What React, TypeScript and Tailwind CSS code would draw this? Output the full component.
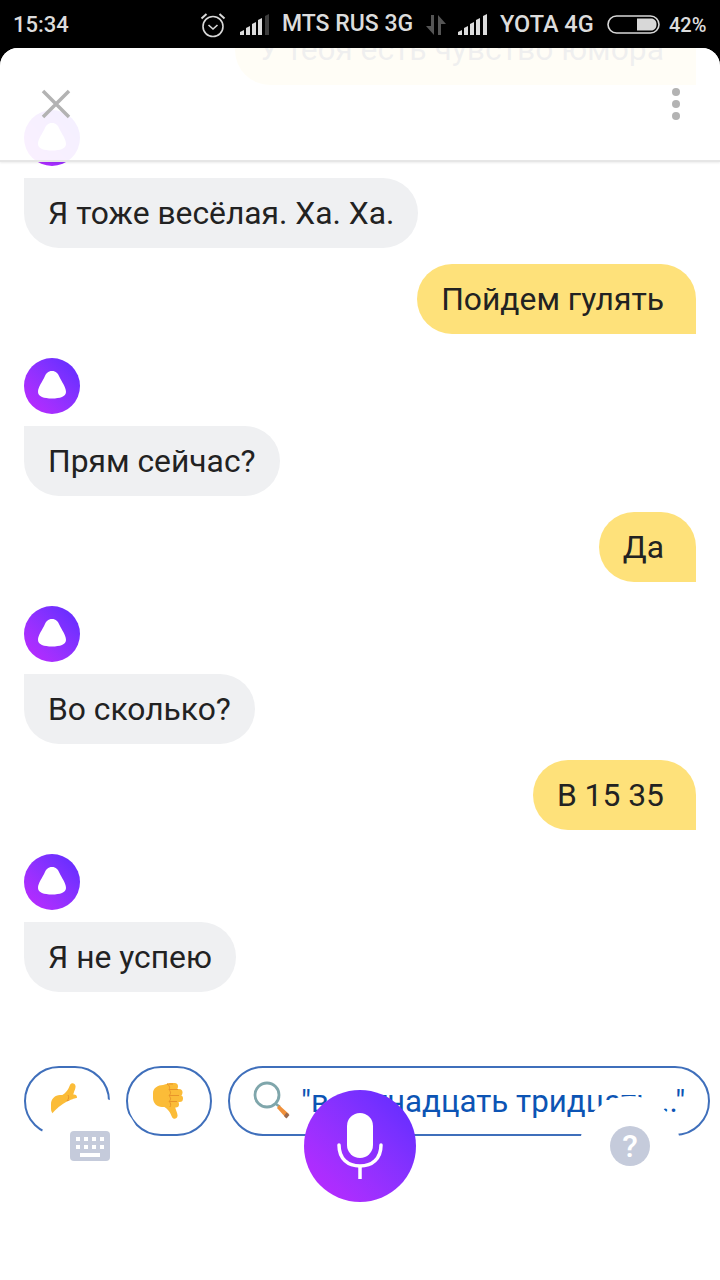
import React from "react";

function Alisa({ className = "" }: { className?: string }) {
  return (
    <div className={"w-14 h-14 rounded-full bg-gradient-to-tr from-[#c026fe] to-[#5b2bff] flex items-center justify-center " + className}>
      <svg width="28" height="28" viewBox="0 0 28 28" className="mt-[-3px]">
        <path d="M14 0C18 0 20 2.500 21.500 6C23.500 10.500 28 16 28 21C28 25.500 22 27.500 14 27.500C6 27.500 0 25.500 0 21C0 16 4.500 10.500 6.500 6C8 2.500 10 0 14 0Z" fill="#fff" />
      </svg>
    </div>
  );
}

function Bot({ text }: { text: string }) {
  return (
    <div className="self-start h-[70px] rounded-[35px] rounded-tl-none bg-[#eff0f2] px-6 pt-[2px] flex items-center text-[31.800px] text-[#222] whitespace-nowrap">{text}</div>
  );
}

function User({ text }: { text: string }) {
  return (
    <div className="self-end h-[70px] rounded-[35px] rounded-br-none bg-[#fee17a] pl-6 pr-8 pt-[2px] flex items-center text-[31.800px] text-[#222] whitespace-nowrap">{text}</div>
  );
}

function Thumb({ up = false }: { up?: boolean }) {
  return (
    <svg width="30" height="36" viewBox="0 0 30 36" className={up ? "-scale-y-100" : ""}>
      <path d="M11 22L22 22C22 27 25 30 24.500 33C24 36.500 20 36.500 19 34C17 29 15 26 10 23Z" fill="#fbbc38" />
      <path d="M0 10C0 5 5 2 10 2L15 0.500L18 24L9 24C4 24 0 20 0 15Z" fill="#fbbc38" />
      <rect x="14" y="0" width="11" height="7" rx="3.500" fill="#fbbc38" />
      <rect x="14" y="6" width="15.500" height="7" rx="3.500" fill="#fbbc38" />
      <rect x="14" y="12" width="16" height="7" rx="3.500" fill="#fbbc38" />
      <rect x="14" y="18" width="12" height="6.500" rx="3.200" fill="#fbbc38" />
      <path d="M14 1H20M16 6.500H25M16 12.500H26M16 18.500H24M14 1C17 3 17 5 16 6.500C18 9 18 11 16 12.500C18 15 18 17 16 18.500C18 20 18 22 17 24" fill="none" stroke="#e8952a" strokeWidth="1" />
    </svg>
  );
}

function Chip({ className = "", children }: { className?: string; children: React.ReactNode }) {
  return <div className={"h-[70px] rounded-[35px] border-2 border-[#3f6fbb] flex items-center shrink-0 " + className}>{children}</div>;
}

function Signal({ lastDim = false }: { lastDim?: boolean }) {
  return (
    <svg width="30" height="22" viewBox="0 0 30 22" fill="#dcdcdc" className="shrink-0">
      <polygon points="0,21 0,18 4,16 4,21" />
      <polygon points="6,21 6,14 10,12 10,21" />
      <polygon points="12,21 12,10 16,8 16,21" />
      <polygon points="18,21 18,6 22,4 22,21" />
      <polygon points="25,21 25,2 29,0 29,21" fill={lastDim ? "#3c3c3c" : "#dcdcdc"} />
    </svg>
  );
}

export default function App() {
  return (
    <div className="w-[720px] h-[1280px] bg-black overflow-hidden flex flex-col font-['Roboto',sans-serif]">
      <div className="h-12 shrink-0 flex items-center pl-[13px] text-[#dcdcdc] font-medium pt-[1px]">
        <span className="text-[22px] w-[187px] shrink-0">15:34</span>
        <svg width="26" height="26" viewBox="0 0 26 26" fill="none" stroke="#d8d8d8" strokeWidth="1.600" className="mr-[14px] shrink-0">
          <circle cx="13" cy="14.500" r="10" />
          <path d="M8.500 13L13 17L17.500 13" />
          <path d="M1.500 6.500L6.500 2M24.500 6.500L19.500 2" strokeWidth="2" />
        </svg>
        <Signal lastDim />
        <span className="text-[23px] ml-[12px] w-[132px] shrink-0 whitespace-nowrap">MTS RUS 3G</span>
        <svg width="22" height="22" viewBox="0 0 22 22" fill="#555" className="ml-[11px] shrink-0">
          <path d="M9 1V21L1 12H6V1ZM13 21V1L21 10H16V21Z" />
        </svg>
        <div className="ml-[11px]"><Signal /></div>
        <span className="text-[23.500px] ml-[12px] w-[94px] shrink-0 whitespace-nowrap">YOTA 4G</span>
        <svg width="54" height="20" viewBox="0 0 54 20" fill="none" className="ml-[13px] shrink-0">
          <rect x="1" y="1" width="51" height="17" rx="8.500" stroke="#d8d8d8" strokeWidth="1.600" />
          <path d="M30 3.500H44C47.500 3.500 49.500 6 49.500 9.500C49.500 13 47.500 15.500 44 15.500H30Z" fill="#d8d8d8" />
        </svg>
        <span className="text-[20px] ml-[8px] whitespace-nowrap">42%</span>
      </div>

      <div className="relative flex-1 bg-white rounded-t-[18px] overflow-hidden flex flex-col">
        <div className="flex flex-col px-6 mt-[-33px]">
          <div className="self-end h-[70px] rounded-[35px] rounded-br-none bg-[#fee17a] pl-6 pr-8 flex items-center text-[31.800px] text-[#222] whitespace-nowrap">У тебя есть чувство юмора</div>
          <Alisa className="mt-[25px]" />
          <div className="mt-3 self-start"><Bot text="Я тоже весёлая. Ха. Ха." /></div>
          <div className="mt-4 self-end"><User text="Пойдем гулять" /></div>
          <Alisa className="mt-6" />
          <div className="mt-3 self-start"><Bot text="Прям сейчас?" /></div>
          <div className="mt-4 self-end"><User text="Да" /></div>
          <Alisa className="mt-6" />
          <div className="mt-3 self-start"><Bot text="Во сколько?" /></div>
          <div className="mt-4 self-end"><User text="В 15 35" /></div>
          <Alisa className="mt-6" />
          <div className="mt-3 self-start"><Bot text="Я не успею" /></div>
        </div>

        <div className="mt-[74px] pl-6 flex gap-4">
          <Chip className="w-[86px] pl-[25px]"><Thumb up /></Chip>
          <Chip className="w-[86px] pl-[25px]"><Thumb /></Chip>
          <Chip className="w-[482px] pl-[23px] text-[31.300px] text-[#0c54b4] whitespace-nowrap">
            <svg width="40" height="40" viewBox="0 0 40 40" fill="none" className="mr-[8px] shrink-0">
              <circle cx="14" cy="14" r="12" stroke="#7fa6ab" strokeWidth="2.800" fill="#fff" />
              <path d="M23 23L27 26" stroke="#7fa6ab" strokeWidth="2.500" />
              <path d="M26 24L36 33L33 37L24 27Z" fill="#f0903a" />
              <path d="M33.500 31.500L36.500 34L33.500 37.500L31 35Z" fill="#9a6a50" />
            </svg>
            <span className="mt-[2px]">"в пятнадцать тридцать..."</span>
          </Chip>
        </div>

        <div className="relative mt-[-46px] px-10 flex items-center justify-between">
          <div className="w-[100px] h-[100px] rounded-full bg-white flex items-center justify-center">
            <svg width="40" height="30" viewBox="0 0 40 30">
              <rect width="40" height="30" rx="4" fill="#c5cbdb" />
              <g fill="#fff">
                <rect x="6" y="6" width="4" height="4" /><rect x="14" y="6" width="4" height="4" /><rect x="22" y="6" width="4" height="4" /><rect x="30" y="6" width="4" height="4" />
                <rect x="6" y="14" width="4" height="4" /><rect x="14" y="14" width="4" height="4" /><rect x="22" y="14" width="4" height="4" /><rect x="30" y="14" width="4" height="4" />
                <rect x="10" y="22" width="20" height="4" />
              </g>
            </svg>
          </div>
          <div className="w-28 h-28 rounded-full bg-gradient-to-tr from-[#c026fe] to-[#5b2bff] flex items-center justify-center">
            <svg width="46" height="66" viewBox="0 0 46 66" fill="none">
              <rect x="10" y="0" width="26" height="45" rx="13" fill="#fff" />
              <path d="M2 32C2 46 11 53 23 53C35 53 44 46 44 32" stroke="#fff" strokeWidth="3.500" strokeLinecap="round" />
              <path d="M23 53V66" stroke="#fff" strokeWidth="3.500" />
            </svg>
          </div>
          <div className="w-[100px] h-[100px] rounded-full bg-white flex items-center justify-center">
            <div className="w-10 h-10 rounded-full bg-[#c5cbdb] flex items-center justify-center text-white text-[32px] font-medium leading-none">?</div>
          </div>
        </div>

        <div className="absolute left-0 right-0 top-0 h-[114px] bg-white/[0.93] border-b-2 border-[#e6e6e6] shadow-[0_1px_2px_rgba(0,0,0,0.08)] pl-[41px] pr-[40px] flex items-center justify-between">
          <svg width="30" height="30" viewBox="0 0 30 30" stroke="#b3b3b3" strokeWidth="3.500">
            <path d="M2 2L28 28M28 2L2 28" />
          </svg>
          <div className="flex flex-col gap-[4px]">
            <div className="w-2 h-2 rounded-full bg-[#b3b3b3]" />
            <div className="w-2 h-2 rounded-full bg-[#b3b3b3]" />
            <div className="w-2 h-2 rounded-full bg-[#b3b3b3]" />
          </div>
        </div>
      </div>
    </div>
  );
}
